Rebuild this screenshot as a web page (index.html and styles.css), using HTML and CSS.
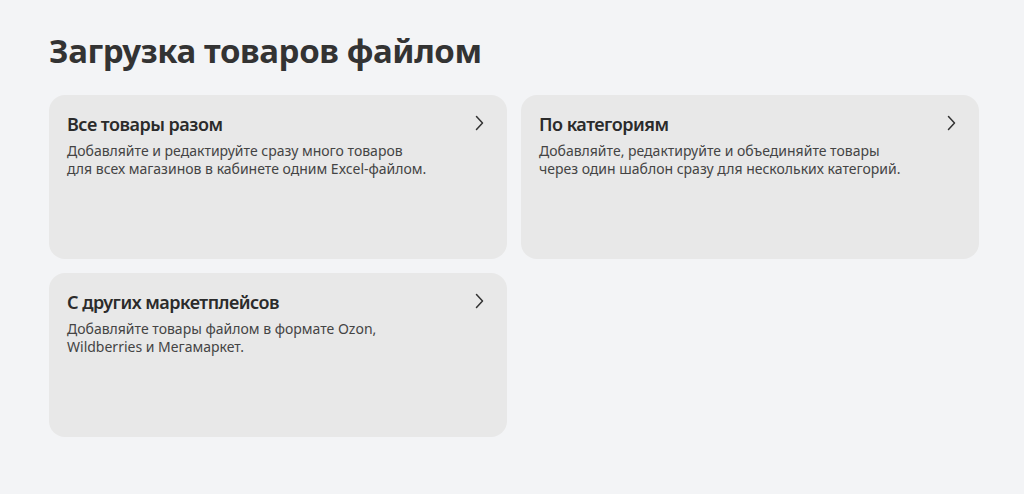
FILE: index.html
```html
<!DOCTYPE html>
<html lang="ru">
  <head>
    <meta charset="UTF-8">
    <meta name="viewport" content="width=device-width, initial-scale=1.0">
    <title>Загрузка товаров файлом</title>
    <link rel="stylesheet" href="styles.css">
  </head>
  <body>
    <main class="page">
      <h1 class="page-title">Загрузка товаров файлом</h1>
      <div class="card-grid">
        <a href="#" class="card">
          <div class="card-head">
            <div class="card-title">Все товары разом</div>
            <svg class="chevron" width="16" height="18" viewBox="0 0 16 18"><path d="M5.5 2.5 L11.5 9 L5.5 15.5" fill="none" stroke="currentColor" stroke-width="1.5" stroke-linecap="round" stroke-linejoin="round"/></svg>
          </div>
          <div class="card-text">Добавляйте и редактируйте сразу много товаров<br>для всех магазинов в кабинете одним Excel-файлом.</div>
        </a>
        <a href="#" class="card">
          <div class="card-head">
            <div class="card-title">По категориям</div>
            <svg class="chevron" width="16" height="18" viewBox="0 0 16 18"><path d="M5.5 2.5 L11.5 9 L5.5 15.5" fill="none" stroke="currentColor" stroke-width="1.5" stroke-linecap="round" stroke-linejoin="round"/></svg>
          </div>
          <div class="card-text">Добавляйте, редактируйте и объединяйте товары<br>через один шаблон сразу для нескольких категорий.</div>
        </a>
        <a href="#" class="card">
          <div class="card-head">
            <div class="card-title">С других маркетплейсов</div>
            <svg class="chevron" width="16" height="18" viewBox="0 0 16 18"><path d="M5.5 2.5 L11.5 9 L5.5 15.5" fill="none" stroke="currentColor" stroke-width="1.5" stroke-linecap="round" stroke-linejoin="round"/></svg>
          </div>
          <div class="card-text">Добавляйте товары файлом в формате Ozon,<br>Wildberries и Мегамаркет.</div>
        </a>
      </div>
    </main>
  </body>
</html>
```

FILE: styles.css
```css
:root {
  font-family: "Noto Sans", "Open Sans", sans-serif;
  color: #2b2b2b;
}

body {
  margin: 0;
  background-color: #f3f4f6;
}

.page {
  padding: 28px 45px 0 49px;
}

.page-title {
  margin: 0 0 21px;
  font-size: 33px;
  line-height: 46px;
  font-weight: 700;
  letter-spacing: -0.4px;
  color: #333;
}

.card-grid {
  display: grid;
  grid-template-columns: 458px 458px;
  gap: 14px;
}

.card {
  display: block;
  height: 164px;
  box-sizing: border-box;
  padding: 15px 20px 0 18px;
  border-radius: 16px;
  background-color: #e8e8e8;
  color: inherit;
  text-decoration: none;
}

.card-head {
  display: flex;
  justify-content: space-between;
  align-items: center;
}

.card-title {
  font-size: 18px;
  line-height: 28px;
  font-weight: 600;
  letter-spacing: -0.5px;
  color: #2b2b2b;
}

.chevron {
  color: #333;
  margin-top: -2px;
}

.card-text {
  margin-top: 4px;
  font-size: 14px;
  line-height: 18px;
  color: #444;
}
```
